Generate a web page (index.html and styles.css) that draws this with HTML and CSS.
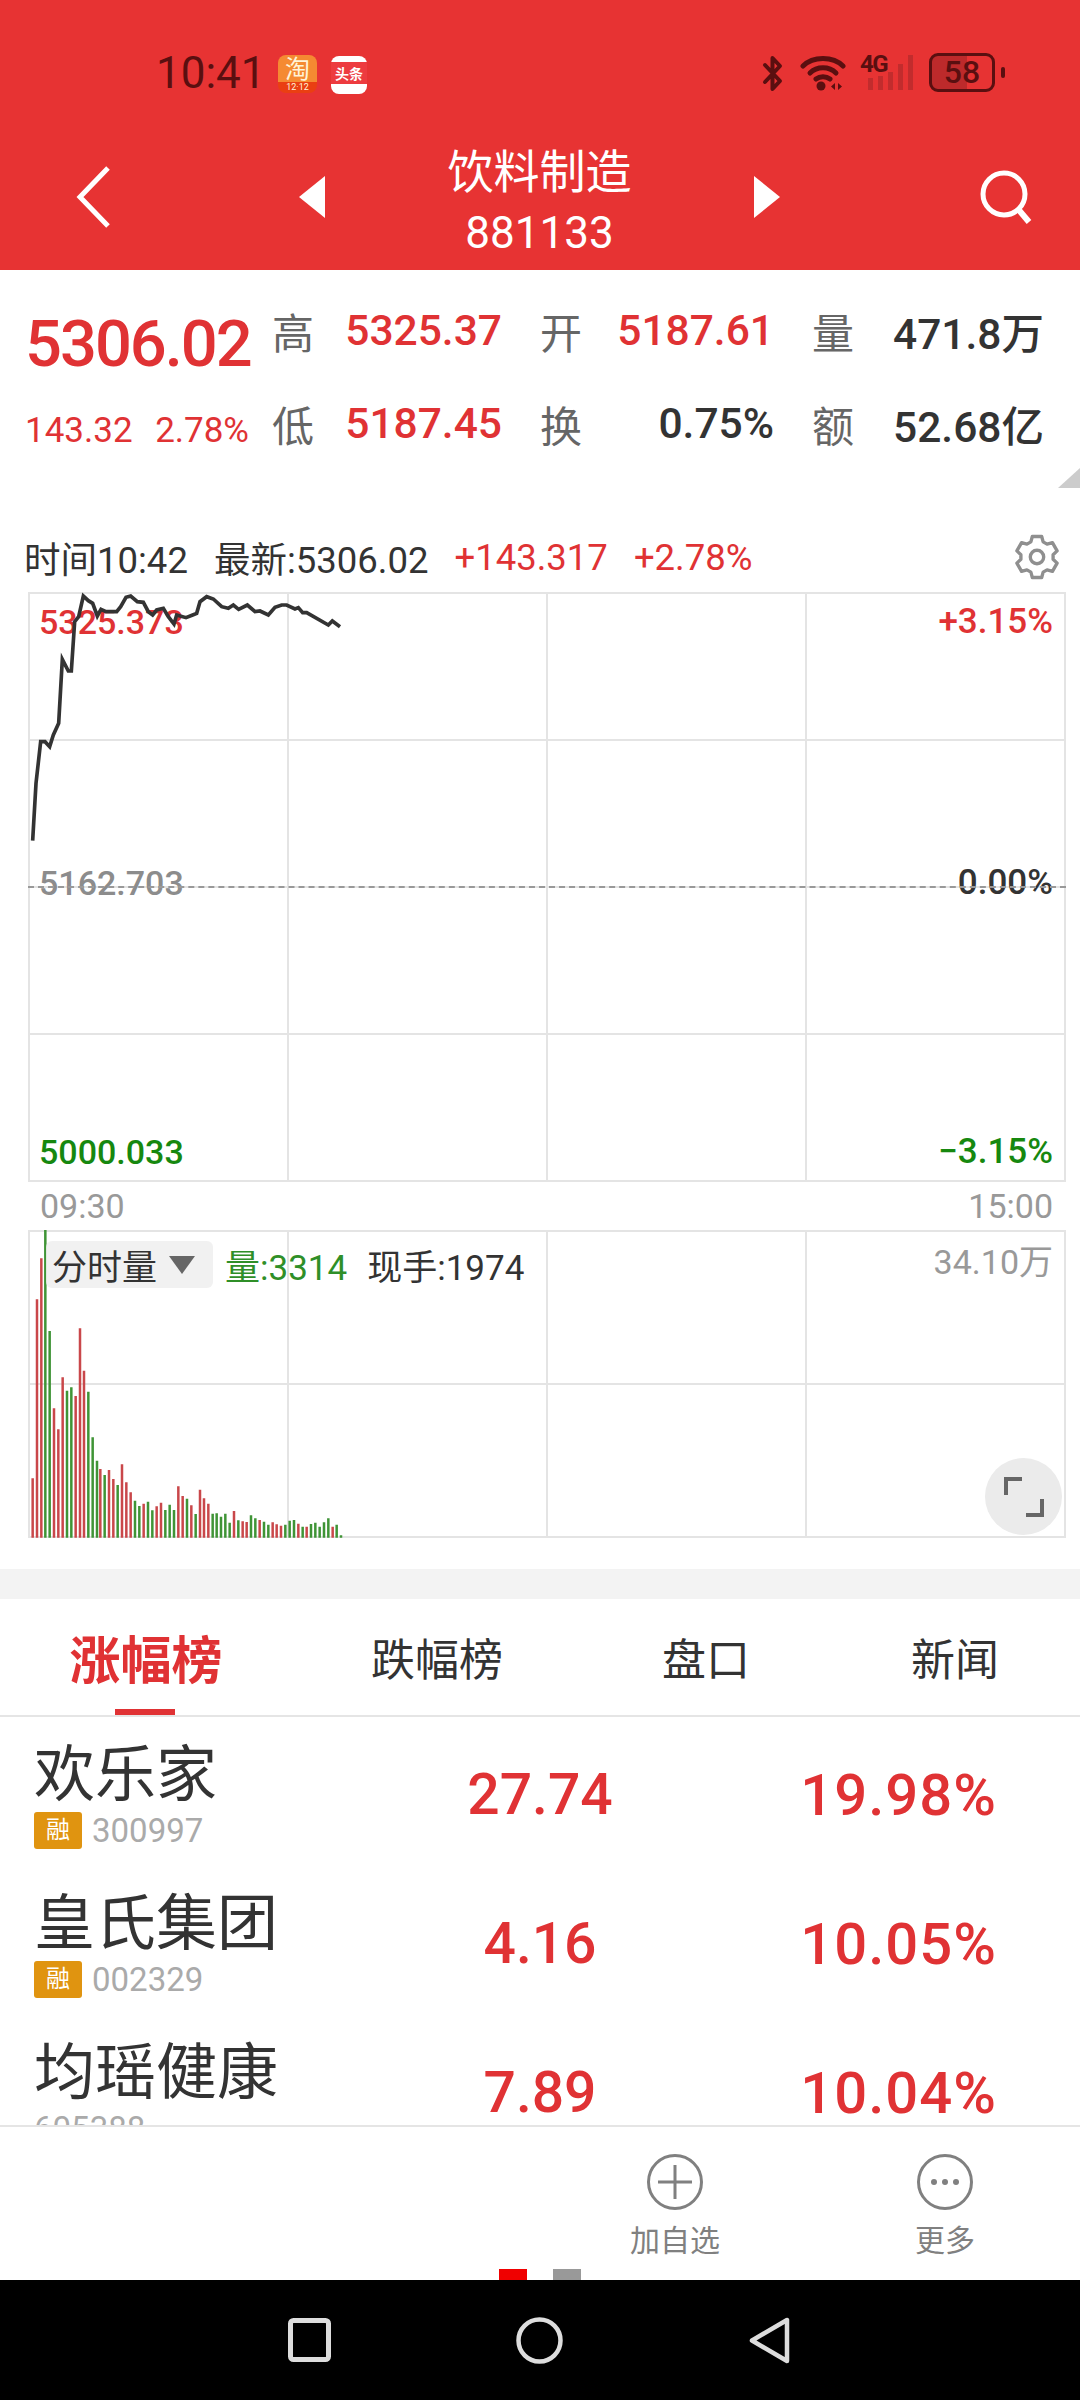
FILE: index.html
```html
<!DOCTYPE html>
<html lang="zh">
<head>
    <meta charset="UTF-8">
    <meta name="viewport" content="width=device-width, initial-scale=1.0">
    <title>饮料制造</title>
    <link rel="stylesheet" href="styles.css">
</head>
<body>
    <header class="top">
        <div class="status">
            <span class="clock">10:41</span>
            <span class="app-icon taobao">淘<small>12·12</small></span>
            <span class="app-icon toutiao">头条</span>
            <span class="status-right">
                <svg class="st-bt" viewBox="0 0 21 37"><path d="M3 10 18 26 10.500 34V3L18 11 3 27" fill="none" stroke="#5a0f10" stroke-width="4" stroke-linejoin="round" stroke-linecap="round"/></svg>
                <svg class="st-wifi" viewBox="0 0 46 37"><g fill="none" stroke="#5a0f10" stroke-width="5" stroke-linecap="round"><path d="M3 11C13 1 33 1 43 11"/><path d="M10 18C17 11 29 11 36 18"/><path d="M16 24C20 21 26 21 30 24"/></g><circle cx="21" cy="31" r="4.500" fill="#5a0f10"/><path d="M35 28v7l-4-3.500zM38 28v7l4-3.500z" fill="#5a0f10"/></svg>
                <span class="st-4g">4G</span>
                <span class="st-signal"><i class="s1"></i><i class="s2"></i><i class="s3"></i><i class="s4"></i><i class="s5"></i></span>
                <span class="st-batt">58</span><i class="st-tip"></i>
            </span>
        </div>
        <div class="nav">
            <svg class="nav-back" viewBox="0 0 40 64"><path d="M34 3 6 32l28 29" fill="none" stroke="#fff" stroke-width="5"/></svg>
            <i class="tri tri-left"></i>
            <div class="nav-title">
                <div class="nav-name">饮料制造</div>
                <div class="nav-code">881133</div>
            </div>
            <i class="tri tri-right"></i>
            <svg class="nav-search" viewBox="0 0 56 56"><circle cx="28" cy="25" r="21" fill="none" stroke="#fff" stroke-width="5"/><path d="M42 40 53 53" stroke="#fff" stroke-width="6"/></svg>
        </div>
    </header>

    <section class="quote">
        <div class="quote-main">
            <div class="price">5306.02</div>
            <div class="change"><span>143.32</span><span>2.78%</span></div>
        </div>
        <div class="quote-grid">
            <div class="pair"><span class="k">高</span><span class="v red">5325.37</span></div>
            <div class="pair"><span class="k">开</span><span class="v red">5187.61</span></div>
            <div class="pair"><span class="k">量</span><span class="v dark">471.8万</span></div>
            <div class="pair"><span class="k">低</span><span class="v red">5187.45</span></div>
            <div class="pair"><span class="k">换</span><span class="v dark">0.75%</span></div>
            <div class="pair"><span class="k">额</span><span class="v dark">52.68亿</span></div>
        </div>
        <i class="corner"></i>
    </section>

    <div class="info">
        <span>时间10:42</span>
        <span class="info-new">最新:5306.02</span>
        <span class="red info-a">+143.317</span>
        <span class="red info-b">+2.78%</span>
        <svg class="gear" viewBox="0 0 48 48"><g fill="none" stroke="#8f8f8f" stroke-width="3.500" stroke-linejoin="round"><polygon points="30.400,8.200 28.900,2.600 19.100,2.600 17.600,8.200 13.500,10.600 7.900,9 3,17.600 7.200,21.600 7.200,26.400 3,30.400 7.900,39 13.500,37.400 17.600,39.800 19.100,45.400 28.900,45.400 30.400,39.800 34.500,37.400 40.100,39 45,30.400 40.800,26.400 40.800,21.600 45,17.600 40.100,9 34.500,10.600"/><circle cx="24" cy="24" r="7"/></g></svg>
    </div>

    <div class="chart price-chart">
        <div class="grid-lines four-rows">
            <i></i><i></i><i></i><i></i>
            <i></i><i></i><i></i><i></i>
            <i></i><i></i><i></i><i></i>
            <i></i><i></i><i></i><i></i>
        </div>
        <span class="lab lt r1 red">5325.373</span>
        <span class="lab rt r1 red">+3.15%</span>
        <span class="lab lt r2 grey">5162.703</span>
        <span class="lab rt r2 dark">0.00%</span>
        <span class="lab lt r3 green">5000.033</span>
        <span class="lab rt r3 green">−3.15%</span>
        <i class="mid-dash"></i>
        <svg class="line" viewBox="0 0 1200 900"><polyline fill="none" stroke="#333" stroke-width="11" points="98,812 108,640 122,515 135,515 149,530 160,495 176,460 187,268 205,303 214,303 224,155 236,140 250,78 265,92 278,100 292,138 303,118 318,125 350,125 362,110 378,82 392,78 412,95 430,97 445,125 458,135 470,120 490,115 505,140 522,162 530,135 558,143 578,135 590,130 600,95 620,80 640,87 665,110 685,115 700,105 716,118 742,105 765,125 780,123 805,135 825,112 845,105 860,105 885,117 895,113 908,128 920,128 985,165 997,153 1020,170"/></svg>
    </div>

    <div class="times"><span>09:30</span><span>15:00</span></div>

    <div class="chart vol-chart">
        <div class="grid-lines two-rows">
            <i></i><i></i><i></i><i></i>
            <i></i><i></i><i></i><i></i>
        </div>
        <svg class="bars" viewBox="0 0 1020 990">
            <path stroke="#c9474a" stroke-width="7.500" d="M38 953V775M51 953V238M64 953V115M102 953V565M115 953V628M128 953V472M167 953V528M180 953V325M192 953V452M241 953V747M267 953V750M280 953V777M306 953V733M319 953V787M332 953V817M371 953V851M410 953V859M423 953V848M475 953V799M488 953V828M514 953V856M540 953V809M552 953V835M565 953V851M642 953V873M668 953V904M680 953V906M719 953V900M758 953V907M770 953V913M783 953V917M835 953V911M860 953V920M938 953V920"/>
            <path stroke="#3f9436" stroke-width="7.500" d="M76 953V30M89 953V333M141 953V512M154 953V502M205 953V515M218 953V652M231 953V722M254 953V765M293 953V795M345 953V842M358 953V858M384 953V845M397 953V871M436 953V870M449 953V854M462 953V870M501 953V836M527 953V882M578 953V881M590 953V880M603 953V890M616 953V881M629 953V908M655 953V901M693 953V886M706 953V895M732 953V905M745 953V914M796 953V914M809 953V902M822 953V900M848 953V920M873 953V912M886 953V908M899 953V920M912 953V907M925 953V895M950 953V914M963 953V946"/>
        </svg>
        <div class="vol-head">
            <span class="vol-pick">分时量<i class="vol-arrow"></i></span>
            <span class="vol-a">量:3314</span>
            <span class="dark vol-b">现手:1974</span>
        </div>
        <span class="vol-max">34.10万</span>
        <span class="expand"><svg viewBox="0 0 40 40"><path d="M2 18V2H18M38 22V38H22" fill="none" stroke="#666" stroke-width="4"/></svg></span>
    </div>

    <div class="band"></div>

    <nav class="tabs">
        <span class="tab tab-on">涨幅榜</span>
        <span class="tab tab-2">跌幅榜</span>
        <span class="tab tab-3">盘口</span>
        <span class="tab tab-4">新闻</span>
    </nav>

    <div class="list">
        <div class="row">
            <div class="stock"><div class="name">欢乐家</div><div class="code"><b class="rong">融</b>300997</div></div>
            <div class="last">27.74</div>
            <div class="pct">19.98%</div>
        </div>
        <div class="row">
            <div class="stock"><div class="name">皇氏集团</div><div class="code"><b class="rong">融</b>002329</div></div>
            <div class="last">4.16</div>
            <div class="pct">10.05%</div>
        </div>
        <div class="row">
            <div class="stock"><div class="name">均瑶健康</div><div class="code">605388</div></div>
            <div class="last">7.89</div>
            <div class="pct">10.04%</div>
        </div>
    </div>

    <footer class="actions">
        <div class="act">
            <svg viewBox="0 0 56 56"><circle cx="28" cy="28" r="26.500" fill="none" stroke="#808080" stroke-width="3"/><path d="M11 28h34M28 11v34" stroke="#808080" stroke-width="3"/></svg>
            <span>加自选</span>
        </div>
        <div class="act">
            <svg viewBox="0 0 56 56"><circle cx="28" cy="28" r="26.500" fill="none" stroke="#808080" stroke-width="3"/><g fill="#808080"><circle cx="17" cy="28" r="3"/><circle cx="28" cy="28" r="3"/><circle cx="39" cy="28" r="3"/></g></svg>
            <span>更多</span>
        </div>
        <div class="dots"><i class="dot-on"></i><i></i></div>
    </footer>

    <div class="sysnav">
        <svg class="sys-sq" viewBox="0 0 43 44"><rect x="2.500" y="2.500" width="38" height="39" rx="3" fill="none" stroke="#ddd" stroke-width="5"/></svg>
        <svg class="sys-o" viewBox="0 0 47 47"><circle cx="23.500" cy="23.500" r="21" fill="none" stroke="#ddd" stroke-width="4.500"/></svg>
        <svg class="sys-tri" viewBox="0 0 41 47"><path d="M38 3V44L3 23.500Z" fill="none" stroke="#ddd" stroke-width="4.500" stroke-linejoin="round"/></svg>
    </div>
</body>
</html>
```
FILE: styles.css
```css
* {
    box-sizing: border-box;
}
html, body {
    margin: 0;
    padding: 0;
}
body {
    width: 1080px;
    height: 2400px;
    overflow: hidden;
    display: flex;
    flex-direction: column;
    background-color: #fff;
    color: #333;
    font-family: Roboto, "Noto Sans CJK SC", sans-serif;
}
i {
    display: block;
}
.red { color: #e03234; }
.green { color: #16880f; }
.dark { color: #333; }
.grey { color: #8c8c8c; }

/* header */
.top {
    height: 270px;
    flex: none;
    background-color: #e73333;
    color: #fff;
}
.status {
    height: 136px;
    padding: 53px 0 0 156px;
    display: flex;
    align-items: flex-start;
}
.clock {
    font-size: 44px;
    line-height: 40px;
    width: 122px;
    color: #5a0f10;
}
.app-icon {
    display: flex;
    flex-direction: column;
    align-items: center;
    justify-content: center;
    height: 38px;
    text-align: center;
    line-height: 1;
}
.taobao {
    width: 39px;
    margin-top: 2px;
    border-radius: 8px;
    background-image: linear-gradient(#f58a32 0 70%, #ea3f12 70%);
    font-size: 25px;
    color: #fff3d8;
}
.taobao small {
    font-size: 9px;
    margin-top: 1px;
}
.toutiao {
    width: 36px;
    margin: 3px 0 0 14px;
    border-radius: 8px;
    background-image: linear-gradient(#fff 0 6px, #ed3b3f 6px 28px, #fff 28px);
    color: #fff;
    font-size: 14px;
    font-weight: 700;
    padding-bottom: 3px;
}
.status-right {
    margin-left: auto;
    margin-right: 75px;
    display: flex;
    align-items: flex-start;
    color: #5a0f10;
    padding-top: 2px;
}
.st-bt {
    width: 21px;
    height: 37px;
}
.st-wifi {
    width: 46px;
    height: 37px;
    margin-left: 17px;
}
.st-4g {
    width: 8px;
    margin-left: 14px;
    font-size: 24px;
    font-weight: 700;
    line-height: 19px;
    letter-spacing: -1.5px;
    white-space: nowrap;
}
.st-signal {
    display: flex;
    align-items: flex-end;
    gap: 5px;
    height: 35px;
}
.st-signal i {
    width: 5px;
    background-color: #c22c2d;
}
.s1 { height: 12px; }
.s2 { height: 14px; }
.s3 { height: 18px; }
.s4 { height: 26px; }
.s5 { height: 35px; }
.st-batt {
    width: 66px;
    height: 39px;
    margin: -2px 0 0 16px;
    border: 3px solid #5a0f10;
    border-radius: 9px;
    background-image: linear-gradient(90deg, #bd2a2b 58%, #e73333 58%);
    color: #5a0f10;
    font-size: 32px;
    font-weight: 500;
    line-height: 33px;
    text-align: center;
}
.st-tip {
    width: 4px;
    height: 11px;
    margin: 12px 0 0 6px;
    border-radius: 2px;
    background-color: #5a0f10;
}
.nav {
    height: 134px;
    padding: 0 48px 12px 74px;
    display: flex;
    align-items: center;
}
.nav-back {
    width: 40px;
    height: 64px;
    flex: none;
}
.tri {
    flex: none;
    width: 0;
    height: 0;
    border-top: 21px solid transparent;
    border-bottom: 21px solid transparent;
}
.tri-left {
    border-right: 26px solid #fff;
    margin-left: 185px;
}
.tri-right {
    border-left: 26px solid #fff;
}
.nav-title {
    width: 429px;
    margin-top: 12px;
    text-align: center;
}
.nav-name {
    font-size: 46px;
    line-height: 61px;
}
.nav-code {
    font-size: 44px;
    line-height: 61px;
}
.nav-search {
    width: 56px;
    height: 56px;
    margin-left: auto;
}

/* quote */
.quote {
    position: relative;
    height: 220px;
    flex: none;
    display: flex;
    padding: 28px 0 0 25px;
}
.quote-main {
    width: 247px;
    color: #e03234;
}
.price {
    font-size: 65px;
    font-weight: 500;
    line-height: 92px;
    letter-spacing: -2px;
}
.change {
    display: flex;
    justify-content: space-between;
    font-size: 35px;
    line-height: 42px;
    margin-top: 20px;
    width: 224px;
}
.quote-grid {
    display: grid;
    grid-template-columns: 230px 234px 232px;
    grid-auto-rows: 93px;
    column-gap: 38px;
    height: 186px;
    margin-top: -14px;
    align-items: center;
}
.pair {
    display: flex;
    align-items: center;
    justify-content: space-between;
}
.k {
    font-size: 42px;
    color: #666;
}
.v {
    font-size: 42.500px;
    font-weight: 500;
}
.corner {
    position: absolute;
    right: 0;
    top: 198px;
    width: 0;
    height: 0;
    border-left: 22px solid transparent;
    border-bottom: 20px solid #ccc;
}

/* charts */
.info {
    height: 102px;
    flex: none;
    display: flex;
    align-items: center;
    padding: 32px 20px 0 24px;
    font-size: 36.500px;
}
.info-new,
.info-a,
.info-b {
    margin-left: 26px;
}
.gear {
    width: 46px;
    height: 46px;
    margin-left: auto;
}
.chart {
    position: relative;
    margin-left: 28px;
    width: 1038px;
    flex: none;
}
.price-chart {
    height: 590px;
}
.grid-lines {
    display: grid;
    grid-template-columns: repeat(4, 1fr);
    height: 100%;
    border-top: 2px solid #e4e4e4;
    border-left: 2px solid #e4e4e4;
}
.four-rows { grid-template-rows: repeat(4, 1fr); }
.two-rows { grid-template-rows: repeat(2, 1fr); }
.grid-lines i {
    border-right: 2px solid #e4e4e4;
    border-bottom: 2px solid #e4e4e4;
}
.mid-dash {
    position: absolute;
    left: 0;
    right: 0;
    top: 294px;
    border-top: 2px dashed #999;
}
.lab {
    position: absolute;
    font-size: 34px;
    font-weight: 500;
    line-height: 40px;
}
.lt { left: 11px; }
.rt {
    right: 13px;
    font-size: 35px;
}
.r1 { top: 10px; }
.r2 { top: 271px; }
.r3 { top: 540px; }
.line {
    position: absolute;
    left: -28px;
    top: -22px;
    width: 400px;
    height: 300px;
}
.times {
    height: 48px;
    flex: none;
    display: flex;
    justify-content: space-between;
    align-items: center;
    padding: 0 27px 0 40px;
    font-size: 34px;
    color: #999;
}
.vol-chart {
    height: 308px;
}
.bars {
    position: absolute;
    left: -8px;
    top: -10px;
    width: 340px;
    height: 330px;
}
.vol-head {
    position: absolute;
    left: 18px;
    top: 9px;
    display: flex;
    align-items: center;
    font-size: 35px;
}
.vol-pick {
    display: flex;
    align-items: center;
    height: 47px;
    width: 167px;
    padding-left: 6px;
    border-radius: 6px;
    background-color: rgba(238, 238, 238, .85);
}
.vol-arrow {
    width: 0;
    height: 0;
    margin-left: 12px;
    border-left: 13px solid transparent;
    border-right: 13px solid transparent;
    border-top: 18px solid #666;
}
.vol-a {
    margin-left: 12px;
    color: #2f8f28;
}
.vol-b { margin-left: 20px; }
.vol-max {
    position: absolute;
    right: 13px;
    top: 5px;
    font-size: 34px;
    color: #999;
}
.expand {
    position: absolute;
    right: 4px;
    top: 228px;
    width: 77px;
    height: 77px;
    border-radius: 50%;
    background-color: #ebebeb;
    display: flex;
    align-items: center;
    justify-content: center;
}
.expand svg {
    width: 40px;
    height: 40px;
}

/* lists */
.band {
    height: 30px;
    flex: none;
    margin-top: 31px;
    background-color: #f3f3f3;
}
.tabs {
    height: 118px;
    flex: none;
    position: relative;
    display: flex;
    align-items: center;
    border-bottom: 2px solid #e5e5e5;
    font-size: 44px;
}
.tab {
    text-align: center;
    color: #333;
}
.tab-on {
    width: 292px;
    font-size: 51px;
    font-weight: 700;
    color: #e03234;
}
.tab-on::after {
    content: "";
    position: absolute;
    left: 115px;
    bottom: 0;
    width: 60px;
    height: 6px;
    background-color: #e03234;
}
.tab-2 { width: 290px; }
.tab-3 { width: 248px; }
.tab-4 { width: 250px; }
.list {
    height: 408px;
    flex: none;
    padding-top: 3px;
    overflow: hidden;
}
.row {
    height: 149px;
    display: flex;
    align-items: center;
    padding-left: 34px;
}
.stock {
    width: 392px;
}
.name {
    font-size: 61px;
    line-height: 72px;
    color: #333;
}
.code {
    display: flex;
    align-items: center;
    font-size: 33px;
    line-height: 40px;
    color: #aaa;
}
.rong {
    width: 48px;
    height: 37px;
    margin-right: 10px;
    border-radius: 3px;
    background-color: #e09410;
    color: #fff;
    font-size: 24px;
    font-weight: 400;
    line-height: 37px;
    text-align: center;
}
.last,
.pct {
    font-weight: 500;
    color: #e03234;
}
.last {
    width: 228px;
    text-align: center;
    font-size: 57px;
}
.pct {
    width: 343px;
    text-align: right;
    font-size: 58px;
    letter-spacing: 1px;
}

/* bottom */
.actions {
    position: relative;
    height: 155px;
    flex: none;
    display: flex;
    justify-content: flex-end;
    border-top: 2px solid #e5e5e5;
    background-color: #fff;
    overflow: hidden;
}
.act {
    width: 270px;
    padding-top: 27px;
    display: flex;
    flex-direction: column;
    align-items: center;
    font-size: 30px;
    line-height: 40px;
    color: #808080;
}
.act svg {
    width: 56px;
    height: 56px;
    margin-bottom: 11px;
}
.dots {
    position: absolute;
    left: 499px;
    bottom: 0;
    display: flex;
    gap: 26px;
}
.dots i {
    width: 28px;
    height: 11px;
    background-color: #999;
}
.dots .dot-on {
    background-color: #f00000;
}
.sysnav {
    flex: 1;
    background-color: #000;
    display: flex;
    align-items: center;
    padding-left: 288px;
}
.sys-sq {
    width: 43px;
    height: 44px;
}
.sys-o {
    width: 47px;
    height: 47px;
    margin-left: 185px;
}
.sys-tri {
    width: 41px;
    height: 47px;
    margin-left: 186px;
}
```
